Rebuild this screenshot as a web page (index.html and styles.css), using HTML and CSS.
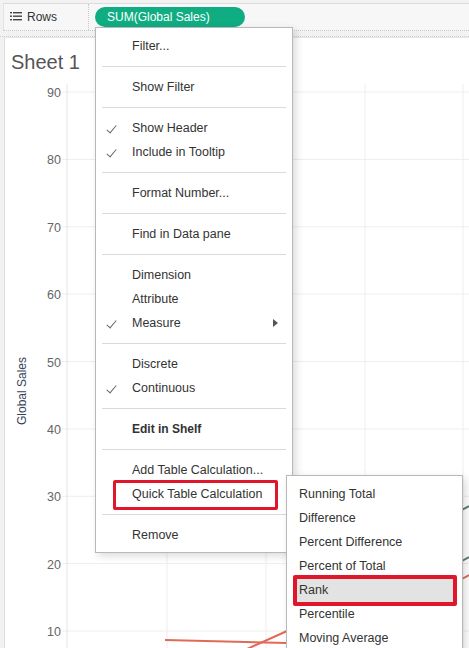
FILE: index.html
```html
<!DOCTYPE html>
<html lang="en">
  <head>
    <meta charset="UTF-8" />
    <meta name="viewport" content="width=device-width, initial-scale=1.0" />
    <title>Sheet 1</title>
    <link rel="stylesheet" href="styles.css">
  </head>
  <body>
    <div class="shelf-bar">
      <div class="shelf-label">
        <svg class="list-icon" width="12" height="9" viewBox="0 0 12 9">
          <rect x="0" y="0" width="2" height="1.4" fill="#444" />
          <rect x="3" y="0" width="9" height="1.4" fill="#444" />
          <rect x="0" y="3.5" width="2" height="1.4" fill="#444" />
          <rect x="3" y="3.5" width="9" height="1.4" fill="#444" />
          <rect x="0" y="7" width="2" height="1.4" fill="#444" />
          <rect x="3" y="7" width="9" height="1.4" fill="#444" />
        </svg>
        <span>Rows</span>
      </div>
      <div class="shelf-pills">
        <span class="pill">SUM(Global Sales)</span>
      </div>
    </div>
    <div class="shelf-gap"></div>

    <div class="sheet">
      <h1 class="sheet-title">Sheet 1</h1>
      <svg class="chart" width="464" height="568" viewBox="0 0 464 568">
        <g class="grid">
          <line x1="57" y1="12" x2="464" y2="12" />
          <line x1="57" y1="79.4" x2="464" y2="79.4" />
          <line x1="57" y1="146.8" x2="464" y2="146.8" />
          <line x1="57" y1="214.1" x2="464" y2="214.1" />
          <line x1="57" y1="281.5" x2="464" y2="281.5" />
          <line x1="57" y1="348.9" x2="464" y2="348.9" />
          <line x1="57" y1="416.3" x2="464" y2="416.3" />
          <line x1="57" y1="483.6" x2="464" y2="483.6" />
          <line x1="57" y1="551" x2="464" y2="551" />
          <line x1="162" y1="4" x2="162" y2="568" />
          <line x1="261" y1="4" x2="261" y2="568" />
          <line x1="360" y1="4" x2="360" y2="568" />
          <line x1="458" y1="4" x2="458" y2="568" />
        </g>
        <line class="axis" x1="62" y1="4" x2="62" y2="568" />
        <g class="ticks">
          <text x="56" y="13">90</text>
          <text x="56" y="80.4">80</text>
          <text x="56" y="147.8">70</text>
          <text x="56" y="215.1">60</text>
          <text x="56" y="282.5">50</text>
          <text x="56" y="349.9">40</text>
          <text x="56" y="417.3">30</text>
          <text x="56" y="484.6">20</text>
          <text x="56" y="552">10</text>
        </g>
        <text class="axis-title" x="17" y="311" transform="rotate(-90 17 311)">Global Sales</text>
        <g class="series">
          <polyline class="red" points="160,560 282,563" />
          <polyline class="red" points="242,569 282,551" />
          <polyline class="red" points="455,500 464,495" />
          <polyline class="green" points="455,431 464,426" />
          <polyline class="green" points="455,482 464,477" />
        </g>
      </svg>
    </div>

    <div class="menu main-menu">
      <div class="item">Filter...</div>
      <div class="sep"></div>
      <div class="item">Show Filter</div>
      <div class="sep"></div>
      <div class="item checked">Show Header</div>
      <div class="item checked">Include in Tooltip</div>
      <div class="sep"></div>
      <div class="item">Format Number...</div>
      <div class="sep"></div>
      <div class="item">Find in Data pane</div>
      <div class="sep"></div>
      <div class="item">Dimension</div>
      <div class="item">Attribute</div>
      <div class="item checked has-sub">Measure</div>
      <div class="sep"></div>
      <div class="item">Discrete</div>
      <div class="item checked">Continuous</div>
      <div class="sep"></div>
      <div class="item bold">Edit in Shelf</div>
      <div class="sep"></div>
      <div class="item">Add Table Calculation...</div>
      <div class="item marked">Quick Table Calculation</div>
      <div class="sep"></div>
      <div class="item">Remove</div>
    </div>

    <div class="menu sub-menu">
      <div class="sub-item">Running Total</div>
      <div class="sub-item">Difference</div>
      <div class="sub-item">Percent Difference</div>
      <div class="sub-item">Percent of Total</div>
      <div class="sub-item active"><span>Rank</span></div>
      <div class="sub-item">Percentile</div>
      <div class="sub-item">Moving Average</div>
    </div>
  </body>
</html>
```

FILE: styles.css
```css
*{
  margin: 0;
  padding: 0;
  box-sizing: border-box;
}

body {
  font-family: "Liberation Sans", Arial, sans-serif;
  font-size: 12.5px;
  color: #333;
  background-color: #f2f2f2;
  height: 648px;
  overflow: hidden;
  position: relative;
}

/* shelf */

.shelf-bar {
  display: flex;
  height: 28px;
  margin: 3px 0 0 3px;
  background-color: #f7f7f7;
  border-top: 1px solid #dcdcdc;
  border-left: 1px solid #e2e2e2;
  border-bottom: 1px dotted #c8c8c8;
}

.shelf-label {
  width: 85px;
  display: flex;
  align-items: center;
  gap: 5px;
  padding-left: 6px;
  border-right: 1px dotted #c8c8c8;
  font-size: 12px;
  color: #333;
}

.list-icon {
  margin-top: -2px;
}

.shelf-pills {
  padding: 3px 0 0 6px;
}

.pill {
  display: block;
  width: 150px;
  height: 20px;
  line-height: 20px;
  padding-left: 12px;
  border-radius: 10px;
  background-color: #10ad82;
  color: #fff;
  font-size: 12px;
}

.shelf-gap {
  height: 6px;
  border-bottom: 1px dotted #cfcfcf;
}

/* sheet */

.sheet {
  margin-left: 4px;
  height: 611px;
  background-color: #fff;
  border-left: 1px solid #dedede;
  border-top: 1px solid #e6e6e6;
}

.sheet-title {
  font-size: 20px;
  font-weight: normal;
  color: #555;
  line-height: 24px;
  padding: 12px 0 0 6px;
  margin-bottom: 6px;
}

.chart {
  display: block;
}

.grid line {
  stroke: #eeeeee;
  stroke-width: 1;
}

.axis {
  stroke: #e4e4e4;
  stroke-width: 1;
}

.ticks text {
  font-size: 12.5px;
  fill: #666;
  text-anchor: end;
  dominant-baseline: central;
}

.axis-title {
  font-size: 12px;
  fill: #34435a;
  text-anchor: middle;
  dominant-baseline: central;
}

.series polyline {
  fill: none;
  stroke-width: 2;
}

.series .red {
  stroke: #e06a57;
}

.series .green {
  stroke: #5d7d70;
}

/* context menus */

.menu {
  position: absolute;
  background-color: #fff;
  border: 1px solid #b8b8b8;
  box-shadow: 3px 3px 8px rgba(0, 0, 0, 0.14);
}

.main-menu {
  left: 95px;
  top: 27px;
  width: 198px;
  padding: 6px 0 5px;
}

.item {
  position: relative;
  height: 24px;
  line-height: 24px;
  padding-left: 36px;
  white-space: nowrap;
}

.item.bold {
  font-weight: bold;
  font-size: 12px;
}

.item.checked::before {
  content: "";
  position: absolute;
  left: 13px;
  top: 7px;
  width: 4px;
  height: 9px;
  border-right: 1px solid #666;
  border-bottom: 1px solid #666;
  transform: rotate(40deg);
}

.item.has-sub::after {
  content: "";
  position: absolute;
  right: 14px;
  top: 8px;
  border-left: 5px solid #555;
  border-top: 4px solid transparent;
  border-bottom: 4px solid transparent;
}

.item.marked::after {
  content: "";
  position: absolute;
  left: 17px;
  right: 14px;
  top: -2px;
  bottom: -4px;
  border: 3px solid #e0162b;
  border-radius: 2px;
}

.sep {
  height: 1px;
  margin: 8px 6px;
  background-color: #d9d9d9;
}

.sub-menu {
  left: 286px;
  top: 475px;
  width: 177px;
  height: 190px;
  padding-top: 6px;
}

.sub-item {
  position: relative;
  height: 24px;
  line-height: 24px;
  padding-left: 12px;
  white-space: nowrap;
}

.sub-item.active::before {
  content: "";
  position: absolute;
  left: 6px;
  right: 5px;
  top: -3px;
  bottom: -4px;
  background-color: #e3e3e3;
  border: 4px solid #e0162b;
  border-radius: 2px;
}

.sub-item.active span {
  position: relative;
}
```
